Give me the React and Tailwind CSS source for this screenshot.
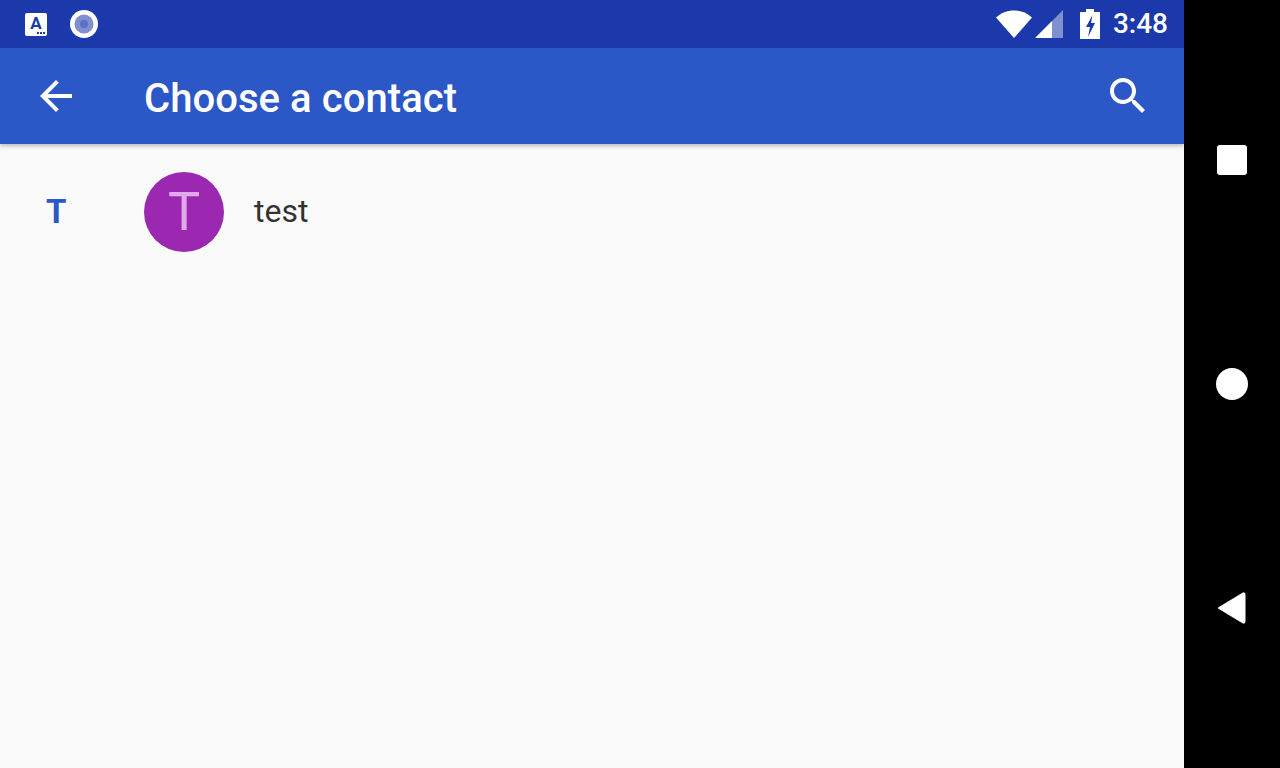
function NotificationIcon() {
  return (
    <svg width="24" height="24" viewBox="0 0 24 24">
      <rect x="1" y="1" width="22" height="23" rx="2" fill="#fff" />
      <text x="12" y="17" textAnchor="middle" fontFamily="Roboto, sans-serif" fontWeight="700" fontSize="17" fill="#1c39ab">A</text>
      <rect x="13" y="20" width="2" height="2" fill="#1c39ab" />
      <rect x="16" y="20" width="2" height="2" fill="#1c39ab" />
      <rect x="19" y="20" width="2" height="2" fill="#1c39ab" />
    </svg>
  );
}

function RecordIcon() {
  return (
    <svg width="28" height="28" viewBox="0 0 28 28">
      <circle cx="14" cy="14" r="14" fill="#fff" />
      <circle cx="14" cy="14" r="9.500" fill="#7f8fd0" />
      <circle cx="14" cy="14" r="4" fill="#5a70c4" />
    </svg>
  );
}

function StatusIcons() {
  return (
    <>
      <svg width="36" height="28" viewBox="0 0 36 28" className="mr-[3px]">
        <path d="M0 7.500C5 3 11 .5 18 .5S31 3 36 7.500L18 28z" fill="#fff" />
      </svg>
      <svg width="28" height="28" viewBox="0 0 28 28" className="mr-[17px]">
        <path d="M0 28 17 11v17z" fill="#fff" />
        <path d="M17 11 28 0v28H17z" fill="#7f8fd0" />
      </svg>
      <svg width="20" height="30" viewBox="0 0 20 30" className="mr-[13px]">
        <path d="M6 0h8v3h6v27H0V3h6z" fill="#fff" />
        <path d="M12.500 6 6 18h4l-2 10 7-14h-4z" fill="#1c39ab" />
      </svg>
    </>
  );
}

function BackIcon() {
  return (
    <svg width="48" height="48" viewBox="0 0 24 24" fill="#fff">
      <path d="M20 11H7.830l5.590-5.590L12 4l-8 8 8 8 1.410-1.410L7.830 13H20v-2z" />
    </svg>
  );
}

function SearchIcon() {
  return (
    <svg width="48" height="48" viewBox="0 0 24 24" fill="#fff">
      <path d="M15.500 14h-.79l-.28-.27C15.410 12.590 16 11.110 16 9.500 16 5.910 13.090 3 9.500 3S3 5.910 3 9.500 5.910 16 9.500 16c1.610 0 3.090-.59 4.230-1.570l.27.28v.79l5 4.990L20.490 19l-4.990-5zm-6 0C7.010 14 5 11.990 5 9.500S7.010 5 9.500 5 14 7.010 14 9.500 11.990 14 9.500 14z" />
    </svg>
  );
}

export default function App() {
  return (
    <div className="flex h-[768px] w-[1280px] overflow-hidden bg-black font-['Roboto',sans-serif]">
      <div className="flex w-[1184px] flex-col bg-[#fafafa]">
        <div className="flex h-[48px] items-center justify-between bg-[#1c39ab] pl-[24px] pr-[16px]">
          <div className="flex items-center gap-[22px]">
            <NotificationIcon />
            <RecordIcon />
          </div>
          <div className="flex items-center">
            <StatusIcons />
            <span className="text-[28px] font-medium leading-none text-white">3:48</span>
          </div>
        </div>

        <div className="z-10 flex h-[96px] items-center bg-[#2b57c7] shadow-[0_2px_4px_rgba(0,0,0,0.25)]">
          <div className="flex w-[144px] pl-[32px]">
            <BackIcon />
          </div>
          <h1 className="flex-1 pt-[6px] text-[40px] font-medium leading-none tracking-[0.06px] text-white">Choose a contact</h1>
          <div className="pr-[32px]">
            <SearchIcon />
          </div>
        </div>

        <div className="flex items-center pt-[28px]">
          <div className="w-[144px] pb-[2px] pl-[46px] text-[33px] font-bold leading-none text-[#2b57c7]">T</div>
          <div className="flex h-[80px] w-[80px] items-center justify-center rounded-full bg-[#9c27b0] text-[54px] leading-none text-[#e1a9e9]">
            T
          </div>
          <div className="pb-[2px] pl-[30px] text-[32px] leading-none text-[#333333]">test</div>
        </div>
      </div>

      <div className="flex w-[96px] flex-col items-center pt-[48px]">
        <div className="flex h-[224px] items-center">
          <div className="h-[30px] w-[30px] rounded-[3px] bg-white" />
        </div>
        <div className="flex h-[224px] items-center">
          <div className="h-[32px] w-[32px] rounded-full bg-white" />
        </div>
        <div className="flex h-[224px] items-center">
          <svg width="32" height="36" viewBox="0 0 32 36">
            <path d="M3 18 27 3.500a1 1 0 0 1 1.500 1v27a1 1 0 0 1-1.500 1z" fill="#fff" stroke="#fff" strokeWidth="2" strokeLinejoin="round" />
          </svg>
        </div>
      </div>
    </div>
  );
}
